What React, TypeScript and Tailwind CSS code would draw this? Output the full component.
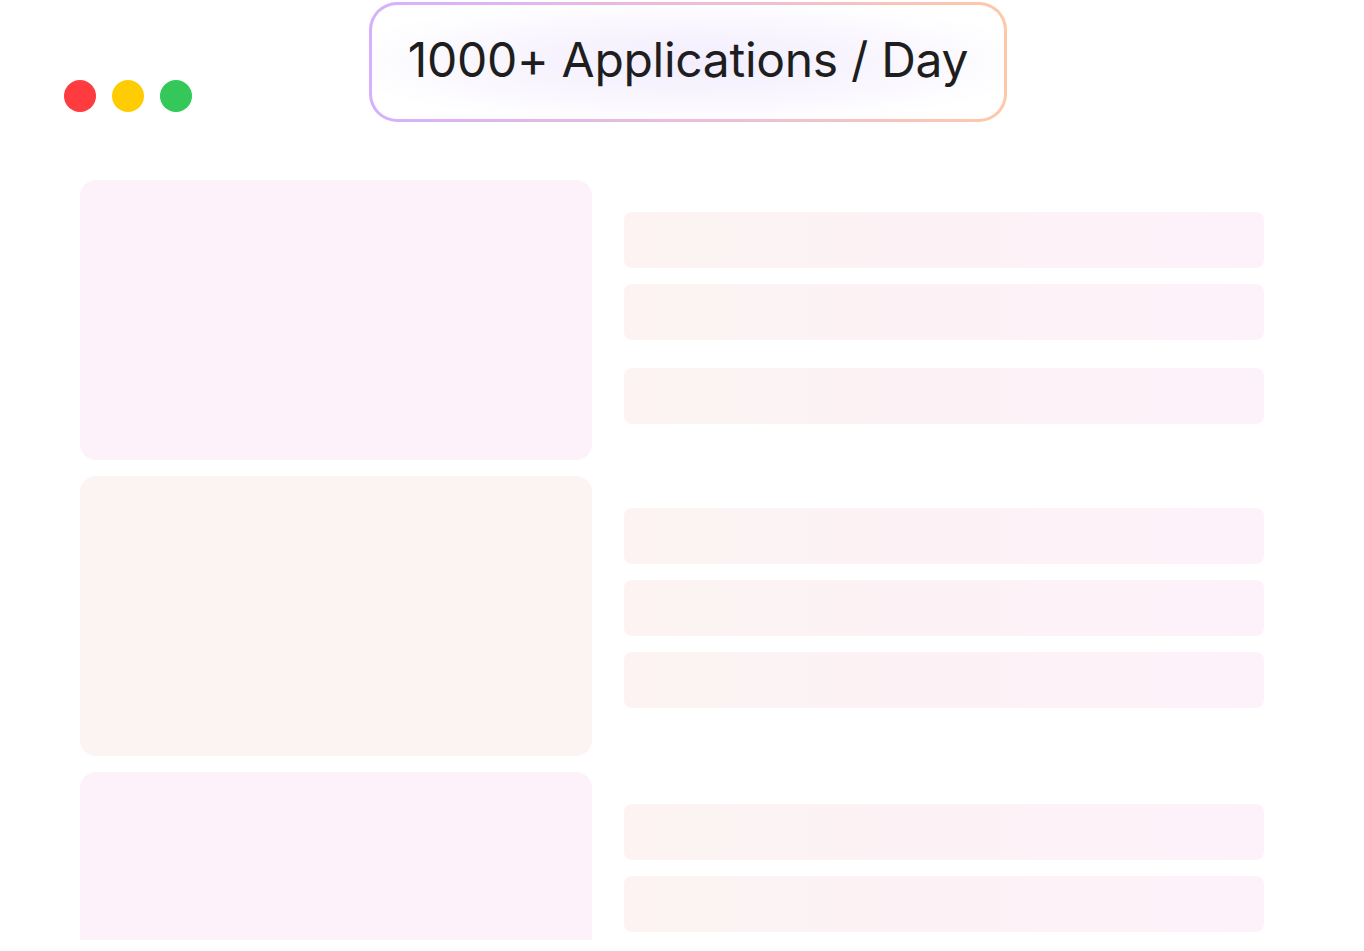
import React from "react";

const Bar = ({ className = "" }: { className?: string }) => (
  <div className={`h-[56px] w-[640px] rounded-[8px] bg-gradient-to-r from-[#fcf3f2] to-[#fdf2fa] ${className}`} />
);

export default function App() {
  return (
    <div className="w-[1364px] h-[951px] bg-white overflow-hidden" style={{ fontFamily: "Inter, 'Noto Sans', sans-serif" }}>
      <div className="h-[940px] overflow-hidden">
        <div className="flex h-[180px]">
          <div className="flex gap-4 pl-[64px] pt-[80px]">
            <div className="w-8 h-8 rounded-full bg-[#fe3b3f]" />
            <div className="w-8 h-8 rounded-full bg-[#ffcc00]" />
            <div className="w-8 h-8 rounded-full bg-[#34c759]" />
          </div>
          <div className="ml-[177px] mt-[2px] w-[638px] h-[120px] p-[3px] rounded-[28px] bg-gradient-to-r from-[#d6b0fd] via-[#ecbcdc] to-[#fec8a8]">
            <div className="w-full h-full pb-[4px] rounded-[25px] bg-[radial-gradient(ellipse_at_center,#f3edfe_0%,#f9f6fe_45%,#ffffff_80%)] flex items-center justify-center">
              <span className="text-[48px] leading-none text-[#1e1e1e] tracking-[-0.3px]">1000+ Applications / Day</span>
            </div>
          </div>
        </div>
        <div className="flex flex-col gap-4 pl-[80px]">
          <div className="flex gap-8">
            <div className="w-[512px] h-[280px] rounded-[16px] bg-[#fdf2fa]" />
            <div className="flex flex-col gap-4 pt-[32px]">
              <Bar />
              <Bar />
              <Bar className="mt-[12px]" />
            </div>
          </div>
          <div className="flex gap-8">
            <div className="w-[512px] h-[280px] rounded-[16px] bg-[#fcf4f2]" />
            <div className="flex flex-col gap-4 pt-[32px]">
              <Bar />
              <Bar />
              <Bar />
            </div>
          </div>
          <div className="flex gap-8">
            <div className="w-[512px] h-[280px] rounded-[16px] bg-[#fdf2fa]" />
            <div className="flex flex-col gap-4 pt-[32px]">
              <Bar />
              <Bar />
            </div>
          </div>
        </div>
      </div>
    </div>
  );
}
